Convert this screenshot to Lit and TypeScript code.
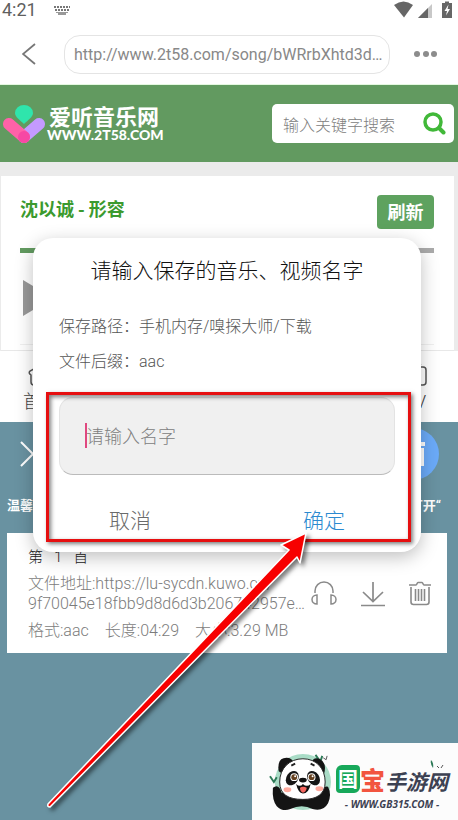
import { LitElement, html, css, svg } from "lit";
import { customElement } from "lit/decorators.js";

const statusIcons = html`<svg class="status-icons" width="58" height="18" viewBox="0 0 58 18" aria-hidden="true">
  <path d="M0 4Q9.500-3 19 4L10 16.500Z" fill="#666" />
  <path d="M24 17L38 3V17Z" fill="#c8c8c8" />
  <path d="M24 17L34 7V17Z" fill="#666" />
  <path d="M51 2V0.500H55V2H58V17H48V2Z" fill="#666" />
  <path d="M54.500 3.500L50.500 10H53L52 14.500L56 8H53.600Z" fill="#fff" />
</svg>`;

const keyboardIcon = html`<svg width="16" height="9" viewBox="0 0 16 9" aria-hidden="true">
  <path d="M0 1H16M1 4H16" stroke="#777" stroke-width="2" stroke-dasharray="2 1" />
  <path d="M2 6.500H14" stroke="#999" stroke-width="1" />
  <path d="M4 8H12" stroke="#777" stroke-width="1.500" />
</svg>`;

const dot = (x: number, y: number, r: number) => svg`<circle cx=${x} cy=${y} r=${r} />`;

@customElement("site-header")
export class SiteHeader extends LitElement {
  static styles = css`
    :host { display: block; }
    .bar {
      display: flex; align-items: center; justify-content: space-between;
      height: 77px; padding: 0 4px 0 2px; box-sizing: border-box; background: #629a60;
    }
    .brand { display: flex; align-items: center; gap: 2px; color: #fff; text-decoration: none; }
    .words { display: flex; flex-direction: column; gap: 2px; }
    .cn { font: 700 22px/20px "Noto Sans CJK SC", sans-serif; padding-left: 2px; }
    .en { font: 900 14px/16px Lato, sans-serif; }
    .search {
      display: flex; align-items: center; width: 182px; height: 39px; box-sizing: border-box;
      padding: 0 8px 0 11px; background: #fff; border-radius: 5px;
    }
    .field {
      flex: 1; min-width: 0; border: 0; padding: 0; outline: 0; background: none;
      font: 300 16px/20px "Noto Sans CJK SC", sans-serif; color: #555;
    }
    .field::placeholder { color: #808080; opacity: 1; }
    .go { border: 0; padding: 0; background: none; display: flex; }
  `;
  render() {
    return html`<header class="bar">
      <a class="brand" href="#">
        <svg width="43" height="40" viewBox="0 0 43 40" aria-hidden="true">
          <path d="M37 20L22 33" stroke="#c49aff" stroke-width="12" stroke-linecap="round" />
          <path d="M7 20L22 33" stroke="#ff62a8" stroke-width="12" stroke-linecap="round" />
          <circle cx="22" cy="33" r="6" fill="#f748a4" />
          <path d="M22 20C18 16 13 13 13 9A9 8 0 0 1 31 9C31 13 26 16 22 20Z" fill="#2fe5ac" />
        </svg>
        <span class="words"><span class="cn">爱听音乐网</span><span class="en">WWW.2T58.COM</span></span>
      </a>
      <form class="search">
        <input class="field" placeholder="输入关键字搜索" aria-label="输入关键字搜索" />
        <button class="go" type="button" aria-label="搜索">
          <svg width="23" height="23" viewBox="0 0 23 23" fill="none" stroke="#41b839" stroke-linecap="round">
            <circle cx="10" cy="10" r="8" stroke-width="3.500" />
            <path d="M16 16L20.500 20.500" stroke-width="4" />
          </svg>
        </button>
      </form>
    </header>`;
  }
}

@customElement("save-dialog")
export class SaveDialog extends LitElement {
  static styles = css`
    :host { display: block; }
    .box {
      position: relative; box-sizing: border-box; padding: 20px 26px 16px; border-radius: 20px;
      background: #fff; box-shadow: 0 5px 18px rgba(0, 0, 0, 0.25);
      font-family: Roboto, "Noto Sans CJK SC", sans-serif;
    }
    .title { margin: 0 0 27px; text-align: center; font-size: 21px; line-height: 27px; font-weight: 300; color: #111; }
    .row { margin: 0; font-size: 16px; line-height: 30px; color: #555; font-weight: 300; }
    .row + .row { margin-top: 5px; }
    .entry { position: relative; margin-top: 20px; }
    .name {
      display: block; width: 100%; height: 78px; box-sizing: border-box; padding: 0 26px; outline: 0;
      border: 1px solid #e3e3e3; border-bottom-color: #bbb; border-radius: 14px; background: #f0f0f0;
      font: 300 18px/24px Roboto, "Noto Sans CJK SC", sans-serif; color: #333;
    }
    .name::placeholder { color: #808080; opacity: 1; }
    .caret { position: absolute; left: 26px; top: 26px; width: 2px; height: 25px; background: #e0487f; }
    .actions { display: grid; grid-template-columns: 1fr 1fr; margin: 27px -26px 0; }
    .btn { border: 0; background: none; padding: 0; font: 300 21px/34px "Noto Sans CJK SC", sans-serif; color: #6a6a6a; }
    .ok { color: #2b8ad0; }
    .mark {
      position: absolute; left: 13px; right: 10px; top: 154px; bottom: 10px; box-sizing: border-box;
      border: 3px solid #e60f10; pointer-events: none;
      box-shadow: 2px 2px 4px rgba(0, 0, 0, 0.5), inset 2px 2px 4px rgba(0, 0, 0, 0.5);
    }
  `;
  render() {
    return html`<section class="box" role="dialog" aria-labelledby="t">
      <h2 class="title" id="t">请输入保存的音乐、视频名字</h2>
      <p class="row">保存路径：手机内存/嗅探大师/下载</p>
      <p class="row">文件后缀：aac</p>
      <div class="entry">
        <input class="name" placeholder="请输入名字" aria-label="请输入名字" />
        <span class="caret"></span>
      </div>
      <div class="actions">
        <button class="btn">取消</button>
        <button class="btn ok">确定</button>
      </div>
      <div class="mark"></div>
    </section>`;
  }
}

@customElement("media-item")
export class MediaItem extends LitElement {
  static styles = css`
    :host { display: block; }
    .card {
      display: flex; align-items: center; height: 120px; box-sizing: border-box; padding: 2px 15px 0 21px;
      background: #fff; font: 300 16px/20px Roboto, "Noto Sans CJK SC", sans-serif; color: #7c7c7c;
    }
    .text { width: 274px; flex: none; white-space: nowrap; }
    .no { display: flex; gap: 11px; margin: 0 0 7px; font-size: 15px; color: #222; }
    .url { margin: 0 0 7px; }
    .meta { display: flex; gap: 16px; margin: 0; }
    .tools { display: flex; flex: 1; justify-content: space-between; padding-left: 9px; }
    .tool { border: 0; background: none; padding: 0; display: flex; }
  `;
  render() {
    return html`<article class="card">
      <div class="text">
        <p class="no"><span>第</span><span>1</span><span>首</span></p>
        <p class="url">文件地址:https://lu-sycdn.kuwo.cn/<br />9f70045e18fbb9d8d6d3b206742957e…</p>
        <p class="meta"><span>格式:aac</span><span>长度:04:29</span><span>大小:3.29 MB</span></p>
      </div>
      <div class="tools">
        <button class="tool" aria-label="试听">
          <svg width="26" height="26" viewBox="0 0 26 26" fill="none" stroke="#8a8a8a" stroke-width="1.500">
            <path d="M4 12V10A9 9 0 0 1 22 10V12" />
            <path d="M6 14V23C3 23 1 21 1 18.500S3 14 6 14Z" />
            <path d="M20 14V23C23 23 25 21 25 18.500S23 14 20 14Z" />
          </svg>
        </button>
        <button class="tool" aria-label="下载">
          <svg width="26" height="26" viewBox="0 0 26 26" fill="none" stroke="#8a8a8a" stroke-width="1.700">
            <path d="M13 1V20M3 11L13 20.500L23 11M1 24.500H25" />
          </svg>
        </button>
        <button class="tool" aria-label="删除">
          <svg width="24" height="26" viewBox="0 0 24 26" fill="none" stroke="#8a8a8a" stroke-width="1.600">
            <path d="M1 4H8C9 4 9 1.500 10 1.500H14C15 1.500 15 4 16 4H23" />
            <path d="M3 6V21Q3 23.500 5.500 23.500H18.500Q21 23.500 21 21V6M7.500 8V20M10.500 8V20M13.500 8V20M16.500 8V20" />
          </svg>
        </button>
      </div>
    </article>`;
  }
}

@customElement("site-badge")
export class SiteBadge extends LitElement {
  static styles = css`
    :host { display: block; }
    .badge { position: relative; display: flex; align-items: center; height: 77px; gap: 4px; padding: 0 10px 0 16px; background: #fcfcfc; }
    .words { display: flex; flex-direction: column; align-items: center; padding-top: 8px; }
    .cn { display: flex; align-items: center; font: 700 21px/32px "Noto Sans CJK SC", sans-serif; color: #3c4152; white-space: nowrap; }
    .green { background: #17a85a; color: #fff; font-size: 20px; line-height: 28px; padding: 0 2px; border-radius: 6px 4px; }
    .red { font-size: 25px; font-weight: 900; color: #f2543f; }
    .tail { font-style: italic; padding-top: 4px; }
    .en { font: italic 700 10px/14px "Noto Sans", sans-serif; color: #3c4152; white-space: nowrap; }
    .leaf { position: absolute; right: 14px; top: 17px; }
  `;
  render() {
    return html`<aside class="badge">
      <svg width="64" height="60" viewBox="0 0 66 62" aria-hidden="true">
        <circle cx="36" cy="31" r="29" fill="#a9dcc6" />
        <path d="M49 3L54 10L56 4M2 25L6 31L9 26" fill="none" stroke="#2d7a57" stroke-width="2" />
        <path d="M57 6L60 8L61 4" fill="none" stroke="#555" />
        <path d="M5 37Q4 50 9 56Q15 62 23 59Q35 53 46 59Q57 62 62 53Q66 44 62 36Q57 34 55 42L14 42Q11 32 5 37Z" fill="#141414" />
        <path d="M11 20Q9 6 19 6Q25 6 27 12L17 24Z" fill="#141414" />
        <path d="M45 12Q46 5 53 7Q61 11 58 22L50 24Z" fill="#141414" />
        <path d="M36 7C50 7 59 17 59 31C59 44 50 49 36 49C21 49 12 44 12 31C12 17 22 7 36 7Z" fill="#fff" stroke="#222" stroke-width="1" />
        <ellipse cx="25" cy="27" rx="6" ry="8" transform="rotate(35 25 27)" fill="#151515" />
        <ellipse cx="47" cy="27" rx="6" ry="8" transform="rotate(-35 47 27)" fill="#151515" />
        <g fill="#fff">${dot(27, 26, 4)}${dot(45, 26, 4)}</g>
        <g fill="#65401f">${dot(27, 26, 3)}${dot(45, 26, 3)}</g>
        <g fill="#fff">${dot(28, 25, 1)}${dot(46, 25, 1)}</g>
        <ellipse cx="36" cy="29" rx="4" ry="2.500" fill="#111" />
        <path d="M29 33Q33 37 36 33Q40 37 44 33Q42 43 36 43Q31 42 29 33Z" fill="#111" />
        <path d="M33 37Q36 35 40 37Q39 42 36 42Q33 41 33 37Z" fill="#f4665f" />
        <ellipse cx="20" cy="39" rx="4" ry="2.500" fill="#ffab9f" />
        <ellipse cx="53" cy="38" rx="4" ry="2.500" fill="#ffab9f" />
        <path d="M24 14L28 12M44 12L48 14" stroke="#222" stroke-width="2" />
      </svg>
      <div class="words">
        <span class="cn"><span class="green">国</span><span class="red">宝</span><span class="tail">手游网</span></span>
        <span class="en">- WWW.GB315.COM -</span>
      </div>
      <svg class="leaf" width="14" height="9" viewBox="0 0 14 9" aria-hidden="true">
        <path d="M1 0Q4 3 3 8Q0 4 1 0Z" fill="#2d7a57" />
        <path d="M7 6L9 8M11 8L13 5" stroke="#555" fill="none" />
      </svg>
    </aside>`;
  }
}

@customElement("app-root")
export class AppRoot extends LitElement {
  static styles = css`
    :host { display: block; position: relative; overflow: hidden; font-family: Roboto, "Noto Sans CJK SC", sans-serif; }
    .page { display: flex; flex-direction: column; min-height: 100vh; background: #6992a1; }
    .status { display: flex; align-items: center; height: 20px; padding: 0 6px 0 2px; gap: 17px; background: #fff; color: #5f5f5f; font-size: 18px; line-height: 20px; }
    .status-icons { margin-left: auto; }
    .nav { display: flex; align-items: center; height: 65px; box-sizing: border-box; padding: 5px 20px 1px 22px; gap: 22px; background: #fff; border-bottom: 1px solid #e4f8e0; }
    .plain { border: 0; background: none; padding: 0; display: flex; }
    .back { width: 20px; }
    .more { padding-left: 2px; }
    .address { flex: 1; min-width: 0; height: 39px; box-sizing: border-box; border: 1px solid #e4e4e4; border-radius: 16px; padding: 0 4px 0 9px; background: #fff; font: 400 16px/20px Roboto, sans-serif; color: #888; text-overflow: ellipsis; outline: 0; }
    .web { padding: 14px 4px 0 1px; background: #ebebeb; }
    .song { display: flex; flex-direction: column; height: 175px; box-sizing: border-box; padding: 19px 20px 5px 19px; background: #fff; border-bottom: 1px solid #e8e8e8; }
    .head { display: flex; justify-content: space-between; align-items: flex-start; }
    .name { margin: 0; font: 700 18px/26px "Noto Sans CJK SC", sans-serif; color: #3b9a2e; }
    .refresh { width: 57px; height: 34px; border: 0; border-radius: 4px; padding: 0 0 2px; background: #5ea25f; color: #fff; font: 700 18px/30px "Noto Sans CJK SC", sans-serif; }
    .track { height: 5px; margin-top: 19px; background: linear-gradient(90deg, #629a60 40%, #aaa 40%); }
    .player { flex: 1; padding: 27px 3px 0; border-bottom: 1px solid #f0f0f0; }
    .tabs { display: flex; justify-content: space-between; height: 71px; box-sizing: border-box; padding: 13px 31px 0 23px; background: #fff; font-size: 18px; line-height: 24px; color: #444; font-weight: 300; }
    .tab { display: flex; flex-direction: column; align-items: center; gap: 4px; color: inherit; text-decoration: none; }
    .panel-top { display: flex; justify-content: space-between; align-items: center; padding: 6px 19px 0 20px; height: 58px; box-sizing: border-box; }
    .tip { display: flex; justify-content: space-between; margin: 0; padding: 16px 17px 17px 7px; font: 700 13px/20px Roboto, "Noto Sans CJK SC", sans-serif; color: #fff; }
    .list { padding: 0 11px 0 7px; }
    .modal { position: absolute; left: 33px; right: 37px; top: 238px; }
    .arrow { position: absolute; left: 40px; top: 524px; pointer-events: none; filter: drop-shadow(3px 3px 2px rgba(0, 0, 0, 0.5)); }
    .corner { position: absolute; right: 0; bottom: 0; }
  `;
  render() {
    return html`
      <main class="page">
        <div class="status"><span>4:21</span>${keyboardIcon}${statusIcons}</div>
        <nav class="nav">
          <button class="plain back" aria-label="返回">
            <svg width="14" height="22" viewBox="0 0 14 22" fill="none" stroke="#777" stroke-width="1.800"><path d="M13 1L1 11L13 21" /></svg>
          </button>
          <input class="address" aria-label="网址" .value=${"http://www.2t58.com/song/bWRrbXhtd3d…"} />
          <button class="plain more" aria-label="更多">
            <svg width="24" height="6" viewBox="0 0 24 6" fill="#8c8c8c">${dot(3, 3, 3)}${dot(12, 3, 3)}${dot(20, 3, 3)}</svg>
          </button>
        </nav>
        <site-header></site-header>
        <div class="web">
          <section class="song">
            <div class="head"><h1 class="name">沈以诚 - 形容</h1><button class="refresh">刷新</button></div>
            <div class="track"></div>
            <div class="player">
              <svg width="30" height="36" viewBox="0 0 30 36" aria-hidden="true"><path d="M0 0L30 18L0 36Z" fill="#999" /></svg>
            </div>
          </section>
        </div>
        <div class="tabs">
          <a class="tab" href="#">
            <svg width="26" height="22" viewBox="0 0 26 22" fill="none" stroke="#555" stroke-width="1.500"><path d="M13 1L2 7Q0 9 3 11V18Q3 21 6 21H20Q23 21 23 18V11Q26 9 24 7Z" /></svg>
            首页
          </a>
          <a class="tab" href="#">
            <svg width="24" height="22" viewBox="0 0 24 22" fill="none" stroke="#555" stroke-width="1.500"><rect x="1" y="3" width="22" height="18" rx="3" /><path d="M12 3L19 -1" /></svg>
            TV
          </a>
        </div>
        <div class="panel-top">
          <button class="plain" aria-label="关闭">
            <svg width="26" height="26" viewBox="0 0 26 26" fill="none" stroke="#fff" stroke-width="2"><path d="M1 1L25 25M25 1L1 25" /></svg>
          </button>
          <button class="plain" aria-label="清空">
            <svg width="52" height="52" viewBox="0 0 52 52"><circle cx="26" cy="26" r="26" fill="#6baaf8" /><path d="M14 14H38V18H14ZM15 20H37V38H15Z" fill="#fff" /></svg>
          </button>
        </div>
        <p class="tip"><span>温馨</span><span>打开“</span></p>
        <div class="list"><media-item></media-item></div>
      </main>
      <save-dialog class="modal"></save-dialog>
      <svg class="arrow" width="280" height="290" viewBox="0 0 280 290" aria-hidden="true">
        <path d="M266 9L241 21L249 26L8 280Q7 283 10 283L257 33L260 39Z" fill="#f70000" stroke="#fff" stroke-width="1.500" stroke-linejoin="round" />
      </svg>
      <site-badge class="corner"></site-badge>
    `;
  }
}
